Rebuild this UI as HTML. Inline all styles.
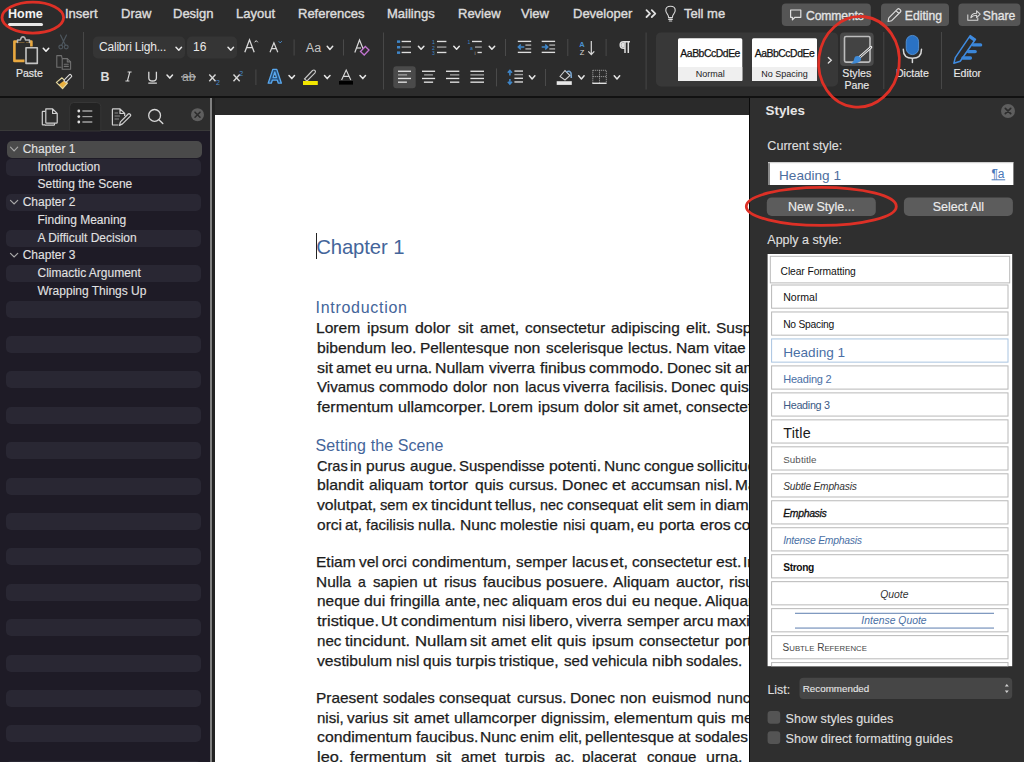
<!DOCTYPE html>
<html><head><meta charset="utf-8">
<style>
*{box-sizing:border-box;margin:0;padding:0}
html,body{width:1024px;height:762px;overflow:hidden;background:#2b2b2b;font-family:"Liberation Sans",sans-serif}
.a{position:absolute}
#ribbon{left:0;top:0;width:1024px;height:96px;background:#2c2c2c}
#rline{left:0;top:96px;width:1024px;height:2px;background:#111}
.tab{top:6px;font-size:13px;color:#dcdcdc;line-height:16px;white-space:nowrap;-webkit-text-stroke:0.4px #dcdcdc}
#nav{left:0;top:98px;width:210px;height:664px;background:#1e1b26}
#navtb{left:0;top:98px;width:210px;height:33px;background:#2d2d2d;border-bottom:1px solid #3a3a3a}
#vl1{left:210px;top:98px;width:2px;height:664px;background:#808080}
#vl2{left:212px;top:98px;width:3px;height:664px;background:#222}
#docbg{left:215px;top:98px;width:534px;height:664px;background:#2a2a2a}
#page{left:215px;top:115px;width:534px;height:647px;background:#fff}
#spl{left:749px;top:98px;width:1px;height:664px;background:#0a0a0a}
#sp{left:750px;top:98px;width:274px;height:664px;background:#2f2f2f}
.stripe{left:6px;width:195px;height:17px;border-radius:5px;background:#292733}
.nvi{font-size:12px;color:#e6e6e6;line-height:17px;white-space:nowrap}
.body{font-size:14px;line-height:20px;color:#1a1a1a;white-space:nowrap}
.head{color:#3b5a8c;white-space:nowrap}
.sitem{left:771px;width:237px;height:23px;border:1px solid #c4c4c4;background:#fff;white-space:nowrap;color:#111}
.btn{border-radius:5px;background:#5e5e5e;color:#f0f0f0;font-size:13px;text-align:center}
#page{overflow:hidden}
#page i{position:absolute;-webkit-text-stroke:0.25px #1c1c1c;font-style:normal;font-size:14.6px;line-height:20px;white-space:nowrap;transform-origin:0 0;transform:scaleX(1.12);color:#1c1c1c}
#page .hd{position:absolute;white-space:nowrap;color:#44659a}
</style></head><body>
<div id="ribbon" class="a"></div>
<div id="rline" class="a"></div>

<!-- tabs -->
<div class="a tab" style="left:8px;font-weight:bold;font-size:12.5px;color:#f2f2f2;-webkit-text-stroke:0">Home</div>
<div class="a" style="left:8px;top:23px;width:35px;height:3px;border-radius:2px;background:#e8e8e8"></div>
<div class="a tab" style="left:65px">Insert</div>
<div class="a tab" style="left:121px">Draw</div>
<div class="a tab" style="left:173px">Design</div>
<div class="a tab" style="left:236px">Layout</div>
<div class="a tab" style="left:298px">References</div>
<div class="a tab" style="left:387px">Mailings</div>
<div class="a tab" style="left:458px">Review</div>
<div class="a tab" style="left:521px">View</div>
<div class="a tab" style="left:573px">Developer</div>
<div class="a tab" style="left:684px">Tell me</div>


<svg class="a" style="left:0;top:0" width="1024" height="96" viewBox="0 0 1024 96">
<g fill="none" stroke-linecap="round" stroke-linejoin="round">
<!-- paste -->
<path d="M24.5 41.5 H14.4 V60.9 H24.5" stroke="#e9a83f" stroke-width="2.6" stroke-linecap="butt"/>
<path d="M26 41.5 H31.4 V46.5" stroke="#e9a83f" stroke-width="2.6" stroke-linecap="butt"/>
<path d="M17.5 42.5 V40 H20.5 Q21 36.8 23 36.8 Q25 36.8 25.5 40 H29.5 V42.5" stroke="#b8b8b8" stroke-width="1.5" fill="#2c2c2c"/>
<rect x="26" y="47.8" width="11.3" height="15.6" stroke="#c4c4c4" stroke-width="1.6" fill="#2c2c2c"/>
<path d="M43.3 48.3 L46 51.2 L48.7 48.3" stroke="#f0f0f0" stroke-width="1.6"/>
<!-- scissors -->
<g stroke="#4d565d" stroke-width="1.2">
<path d="M60.5 35 L65.5 45.5 M66.5 35 L61.5 45.5"/>
<circle cx="60.8" cy="47" r="1.9"/><circle cx="66.2" cy="47" r="1.9"/>
</g>
<!-- copy -->
<g stroke="#707070" stroke-width="1.1">
<path d="M61 67.3 H56.8 V55.6 H61.5 L62 58"/>
<path d="M62.2 58.6 H67.3 L70.6 61.9 V69.3 H62.2 Z"/>
<path d="M67.3 58.6 V61.9 H70.6 M64.3 64.2 H68.3 M64.3 66.4 H68.3"/>
</g>
<!-- format painter -->
<path d="M58.6 84.8 L64.6 80.2 L67.4 83.2 L62.6 88.6 Z" fill="#e9b040" stroke="none"/>
<path d="M56.4 82.4 L62 77.8 L67.4 83.2 L62.6 88.6 Z" stroke="#e4d8a0" stroke-width="1.2" fill="none"/>
<g transform="rotate(45 67.6 78.6)"><rect x="66.1" y="73.6" width="3" height="9" rx="1.2" stroke="#dcdcdc" stroke-width="1.1" fill="#2c2c2c"/></g>
</g>
<text x="16" y="77" font-family="Liberation Sans" font-size="10.5" fill="#e4e4e4" stroke="#e4e4e4" stroke-width="0.2">Paste</text>
<rect x="83" y="32" width="1" height="57" fill="#474747"/>
</svg>

<svg class="a" style="left:0;top:0" width="1024" height="96" viewBox="0 0 1024 96" font-family="Liberation Sans"><rect x="93" y="36.5" width="92" height="22" rx="5" fill="#353535"/>
<rect x="187" y="36.5" width="50" height="22" rx="5" fill="#353535"/>
<text x="99" y="51.3" font-size="12" fill="#e8e8e8" letter-spacing="-0.2">Calibri Ligh...</text>
<path d="M176.0 47.2 L178.8 50.3 L181.5 47.2" stroke="#e6e6e6" stroke-width="1.5" fill="none" stroke-linecap="round" stroke-linejoin="round"/>
<text x="193" y="51.3" font-size="12" fill="#e8e8e8">16</text>
<path d="M228.0 47.2 L230.8 50.3 L233.5 47.2" stroke="#e6e6e6" stroke-width="1.5" fill="none" stroke-linecap="round" stroke-linejoin="round"/>
<path d="M244.8 52.2 L249.5 39.8 L254.2 52.2 M246.5 47.6 H252.5" stroke="#d8d8d8" stroke-width="1.3" fill="none"/>
<path d="M254.6 42.3 L256.2 40.6 L257.8 42.3" stroke="#d8d8d8" stroke-width="1" fill="none"/>
<path d="M270 52.2 L273.9 42.8 L277.8 52.2 M271.4 48.6 H276.4" stroke="#d8d8d8" stroke-width="1.2" fill="none"/>
<path d="M278.6 41.2 L280.2 42.9 L281.8 41.2" stroke="#4a8ccc" stroke-width="1" fill="none"/>
<rect x="293.6" y="39.5" width="1" height="16" fill="#4a4a4a"/>
<text x="305.8" y="52.2" font-size="12.5" fill="#c4c4c4">Aa</text>
<path d="M327.2 46.3 L329.9 49.4 L332.7 46.3" stroke="#e6e6e6" stroke-width="1.5" fill="none" stroke-linecap="round" stroke-linejoin="round"/>
<rect x="343" y="39.5" width="1" height="16" fill="#4a4a4a"/>
<path d="M354.8 52.5 L359.5 40 L364 51" stroke="#d8d8d8" stroke-width="1.2" fill="none"/>
<path d="M356.4 48 H361" stroke="#d8d8d8" stroke-width="1.2"/>
<path d="M360.5 51.5 L365.3 46.5 L369 50 L364.2 55 Z" stroke="#c274d0" stroke-width="1.3" fill="#2c2c2c"/>
<rect x="383" y="32.5" width="1" height="57" fill="#474747"/>
<text x="100.5" y="81.2" font-size="12.5" font-weight="bold" fill="#dcdcdc">B</text>
<path d="M127.6 72 H131.6 M125.4 81 H129.4 M129.8 72 L127.4 81" stroke="#d8d8d8" stroke-width="1.1" fill="none"/>
<path d="M148.8 71.8 V78 Q148.8 81 152.6 81 Q156.4 81 156.4 78 V71.8 M148.3 83.2 H156.9" stroke="#d8d8d8" stroke-width="1.3" fill="none"/>
<path d="M167.0 75.0 L169.8 78.1 L172.5 75.0" stroke="#e6e6e6" stroke-width="1.5" fill="none" stroke-linecap="round" stroke-linejoin="round"/>
<text x="182" y="81.2" font-size="12" fill="#b0b0b0">ab</text>
<rect x="181" y="76.3" width="15" height="1.1" fill="#c0c0c0"/>
<path d="M209.3 74.5 L215.5 81.3 M215.5 74.5 L209.3 81.3" stroke="#d8d8d8" stroke-width="1.4"/>
<text x="216" y="84.5" font-size="7" fill="#4a8ccc">2</text>
<path d="M233.5 74.5 L239.7 81.3 M239.7 74.5 L233.5 81.3" stroke="#d8d8d8" stroke-width="1.4"/>
<text x="239.3" y="75.5" font-size="7" fill="#4a8ccc">2</text>
<rect x="255.4" y="69.5" width="1" height="15.5" fill="#4a4a4a"/>
<path d="M268.2 83.2 L272.8 69.4 H276.8 L281.4 83.2 H278.3 L277.3 80.2 H272.3 L271.3 83.2 Z M273.1 77.6 H276.5 L274.8 72 Z" fill="#24507e" fill-rule="evenodd" stroke="#5aa8ee" stroke-width="1.3" stroke-linejoin="round"/>

<path d="M289.0 75.5 L291.8 78.6 L294.5 75.5" stroke="#e6e6e6" stroke-width="1.5" fill="none" stroke-linecap="round" stroke-linejoin="round"/>
<path d="M304.5 79 L312.5 70.5 Q314 69.5 315 70.5 Q316 71.5 315 73 L307 81 Z" stroke="#c8c8c8" stroke-width="1.1" fill="#2c2c2c"/>
<rect x="303" y="81" width="14.8" height="4" fill="#f2e600"/>
<path d="M324.5 75.5 L327.2 78.6 L330.0 75.5" stroke="#e6e6e6" stroke-width="1.5" fill="none" stroke-linecap="round" stroke-linejoin="round"/>
<path d="M341.6 80 L346.2 70 L350.8 80 M343.3 76.4 H349.1" stroke="#d8d8d8" stroke-width="1.1" fill="none"/>
<rect x="339" y="81" width="14" height="3.6" fill="#000"/>
<path d="M360.0 75.5 L362.8 78.6 L365.5 75.5" stroke="#e6e6e6" stroke-width="1.5" fill="none" stroke-linecap="round" stroke-linejoin="round"/>
<rect x="397" y="40.4" width="3.2" height="2.5" fill="#3f86c8"/>
<rect x="397" y="46" width="3.2" height="2.5" fill="#3f86c8"/>
<rect x="397" y="51.4" width="3.2" height="2.5" fill="#3f86c8"/>
<rect x="401.6" y="40.8" width="9.4" height="1.35" fill="#dedede"/><rect x="401.6" y="46.4" width="9.4" height="1.35" fill="#a0a0a0"/><rect x="401.6" y="51.8" width="9.4" height="1.35" fill="#dedede"/>
<path d="M418.4 46.2 L421.1 49.3 L423.9 46.2" stroke="#e6e6e6" stroke-width="1.5" fill="none" stroke-linecap="round" stroke-linejoin="round"/>
<text x="432" y="44" font-size="5" fill="#3f86c8">1</text><text x="432" y="49.5" font-size="5" fill="#3f86c8">2</text><text x="432" y="55" font-size="5" fill="#3f86c8">3</text>
<rect x="437.0" y="40.8" width="9.4" height="1.35" fill="#dedede"/><rect x="437.0" y="46.4" width="9.4" height="1.35" fill="#a0a0a0"/><rect x="437.0" y="51.8" width="9.4" height="1.35" fill="#dedede"/>
<path d="M453.8 46.2 L456.6 49.3 L459.3 46.2" stroke="#e6e6e6" stroke-width="1.5" fill="none" stroke-linecap="round" stroke-linejoin="round"/>
<text x="467.6" y="44" font-size="5" fill="#3f86c8">1</text><text x="470" y="49.5" font-size="5" fill="#3f86c8">a</text><text x="474.6" y="55" font-size="5" fill="#a0a0a0">i</text>
<rect x="472" y="40.8" width="9.8" height="1.35" fill="#dedede"/><rect x="475" y="46.4" width="6.8" height="1.35" fill="#a0a0a0"/><rect x="477.5" y="51.8" width="4.3" height="1.35" fill="#dedede"/>
<path d="M489.2 46.2 L491.9 49.3 L494.7 46.2" stroke="#e6e6e6" stroke-width="1.5" fill="none" stroke-linecap="round" stroke-linejoin="round"/>
<rect x="505" y="39" width="1" height="17" fill="#4a4a4a"/>
<rect x="517.8" y="40.7" width="13.4" height="1.35" fill="#dedede"/><rect x="517.8" y="51.7" width="13.4" height="1.35" fill="#dedede"/>
<rect x="525.4" y="44.4" width="5.8" height="1.4" fill="#a8a8a8"/><rect x="525.4" y="48.2" width="5.8" height="1.4" fill="#a8a8a8"/>
<path d="M524.3 47 H518.3 M520.8 44.6 L518.3 47 L520.8 49.4" stroke="#3f86c8" stroke-width="1.5" fill="none"/>
<rect x="541.7" y="40.7" width="13.4" height="1.35" fill="#dedede"/><rect x="541.7" y="51.7" width="13.4" height="1.35" fill="#dedede"/>
<rect x="549.3000000000001" y="44.4" width="5.8" height="1.4" fill="#a8a8a8"/><rect x="549.3000000000001" y="48.2" width="5.8" height="1.4" fill="#a8a8a8"/>
<path d="M541.7 47 H547.7 M545.2 44.6 L547.7 47 L545.2 49.4" stroke="#3f86c8" stroke-width="1.5" fill="none"/>
<rect x="567.3" y="39" width="1" height="17" fill="#4a4a4a"/>
<text x="579.3" y="46.5" font-size="7.5" fill="#4a90d0" font-weight="bold">A</text>
<text x="579.8" y="55" font-size="7.5" fill="#d8d8d8">Z</text>
<path d="M591.3 41 V54.5 M588.3 51.3 L591.3 54.5 L594.3 51.3" stroke="#d8d8d8" stroke-width="1.2" fill="none"/>
<rect x="605.6" y="39" width="1" height="17" fill="#4a4a4a"/>
<path d="M625 41.8 V53 M628.3 41.8 V53 M630 41.8 H623.5 Q620.2 41.8 620.2 45 Q620.2 48.2 623.5 48.2 H625" stroke="#e0e0e0" stroke-width="1.5" fill="none"/>
<path d="M624.5 42.5 H622.8 Q621 42.8 621 45 Q621 47.4 623 47.4 H624.5 Z" fill="#e0e0e0"/>
<rect x="645.6" y="32.5" width="1" height="57" fill="#474747"/>
<rect x="393.3" y="66.2" width="22.4" height="22" rx="3" fill="#4a4a4a"/>
<rect x="398.0" y="70.6" width="13.0" height="1.35" fill="#e2e2e2"/><rect x="398.0" y="74.2" width="9.1" height="1.35" fill="#a0a0a0"/><rect x="398.0" y="77.8" width="13.0" height="1.35" fill="#e2e2e2"/><rect x="398.0" y="81.5" width="8.9" height="1.35" fill="#e2e2e2"/>
<rect x="422.0" y="70.60000000000001" width="13.1" height="1.35" fill="#e2e2e2"/>
<rect x="424.1" y="74.2" width="8.8" height="1.35" fill="#a0a0a0"/>
<rect x="422.0" y="77.8" width="13.1" height="1.35" fill="#e2e2e2"/>
<rect x="423.9" y="81.5" width="9.2" height="1.35" fill="#e2e2e2"/>
<rect x="446.0" y="70.60000000000001" width="13.3" height="1.35" fill="#e2e2e2"/>
<rect x="450.0" y="74.2" width="9.3" height="1.35" fill="#a0a0a0"/>
<rect x="446.0" y="77.8" width="13.3" height="1.35" fill="#e2e2e2"/>
<rect x="450.0" y="81.5" width="9.3" height="1.35" fill="#e2e2e2"/>
<rect x="470.4" y="70.6" width="13.6" height="1.35" fill="#e2e2e2"/><rect x="470.4" y="74.2" width="13.6" height="1.35" fill="#a0a0a0"/><rect x="470.4" y="77.8" width="13.6" height="1.35" fill="#e2e2e2"/><rect x="470.4" y="81.5" width="13.6" height="1.35" fill="#e2e2e2"/>
<rect x="496" y="68.4" width="1" height="18" fill="#4a4a4a"/>
<path d="M509.9 70.5 V75.5 M507.8 72.7 L509.9 70.5 L512 72.7 M509.9 79 V84 M507.8 81.8 L509.9 84 L512 81.8" stroke="#3f86c8" stroke-width="1.6" fill="none"/>
<rect x="514.4" y="70.4" width="8.6" height="1.35" fill="#dedede"/><rect x="514.4" y="73.9" width="8.6" height="1.35" fill="#a0a0a0"/><rect x="514.4" y="77.6" width="8.6" height="1.35" fill="#dedede"/><rect x="514.4" y="81.3" width="8.6" height="1.35" fill="#dedede"/>
<path d="M529.4 75.8 L532.1 78.9 L534.9 75.8" stroke="#e6e6e6" stroke-width="1.5" fill="none" stroke-linecap="round" stroke-linejoin="round"/>
<rect x="545" y="69" width="1" height="17" fill="#4a4a4a"/>
<path d="M560 76.5 L565 70.5 L570 75.5 L565 80 Z" stroke="#d0d0d0" stroke-width="1.1" fill="#2c2c2c"/>
<path d="M566.5 72 Q569.5 70 571 73 L571.3 78" stroke="#7aa6d0" stroke-width="1.6" fill="none"/>
<rect x="556.7" y="81.2" width="15.1" height="3.7" fill="#e8e8e8"/>
<path d="M578.6 75.8 L581.4 78.9 L584.1 75.8" stroke="#e6e6e6" stroke-width="1.5" fill="none" stroke-linecap="round" stroke-linejoin="round"/>
<path d="M592.8 70.3 H606.3 V83 M592.8 70.3 V83 M599.5 70.3 V83 M592.8 76.6 H606.3" stroke="#a8a8a8" stroke-width="1" stroke-dasharray="1 1" fill="none"/>
<rect x="592.3" y="82.6" width="14.3" height="1.4" fill="#e0e0e0"/>
<path d="M614.2 75.8 L617.0 78.9 L619.7 75.8" stroke="#e6e6e6" stroke-width="1.5" fill="none" stroke-linecap="round" stroke-linejoin="round"/></svg>
<svg class="a" style="left:0;top:0" width="1024" height="96" viewBox="0 0 1024 96" font-family="Liberation Sans"><rect x="656" y="32.4" width="182" height="54" rx="5" fill="#383838"/>
<rect x="678" y="38.3" width="64.3" height="42.7" rx="1.5" fill="#ffffff"/>
<rect x="678" y="67" width="64.3" height="14" fill="#efefef"/>
<text x="710.15" y="57.3" font-size="10.4" fill="#111" text-anchor="middle" letter-spacing="-0.45" stroke="#111" stroke-width="0.25">AaBbCcDdEe</text>
<text x="710.15" y="76.8" font-size="9" fill="#222" text-anchor="middle">Normal</text>
<rect x="752" y="38.3" width="65" height="42.7" rx="1.5" fill="#ffffff"/>
<rect x="752" y="67" width="65" height="14" fill="#efefef"/>
<text x="784.5" y="57.3" font-size="10.4" fill="#111" text-anchor="middle" letter-spacing="-0.45" stroke="#111" stroke-width="0.25">AaBbCcDdEe</text>
<text x="784.5" y="76.8" font-size="9" fill="#222" text-anchor="middle">No Spacing</text>
<path d="M828.3 57.5 L831.3 60.3 L828.3 63.1" stroke="#e0e0e0" stroke-width="1.3" fill="none" stroke-linecap="round"/>
<rect x="840" y="32.6" width="33.7" height="33.3" rx="4" fill="#4a4a4a"/>
<rect x="844.5" y="36.5" width="25.5" height="25.6" rx="1.5" fill="#434343" stroke="#bdbdbd" stroke-width="1.6"/>
<path d="M871 47.2 L859 57.8" stroke="#e8e8e8" stroke-width="2.6" stroke-linecap="round"/><path d="M870.6 47.6 L859.5 57.4" stroke="#434343" stroke-width="0.9" stroke-linecap="round"/>
<path d="M857.8 56 Q861.5 56.8 861 59.8 Q859.8 63.8 850.8 63.8 Q853.8 61.8 854 59.4 Q854.6 55.6 857.8 56 Z" fill="#3f8ad6"/>
<text x="856.8" y="77.3" font-size="10.6" fill="#e8e8e8" text-anchor="middle" stroke="#e8e8e8" stroke-width="0.15">Styles</text>
<text x="856.8" y="88.5" font-size="10.6" fill="#e8e8e8" text-anchor="middle" stroke="#e8e8e8" stroke-width="0.15">Pane</text>
<rect x="883.3" y="32" width="1" height="57" fill="#474747"/>
<rect x="906.2" y="35.4" width="12.4" height="19.2" rx="6.2" fill="#2a72c4" stroke="#5a9be0" stroke-width="0.8"/>
<path d="M903.3 49.2 Q903.3 58.3 912.4 58.3 Q921.5 58.3 921.5 49.2 M912.4 58.3 V62.6" stroke="#d8d8d8" stroke-width="1.5" fill="none" stroke-linecap="round"/>
<text x="912.4" y="77.3" font-size="10.6" fill="#e8e8e8" text-anchor="middle" stroke="#e8e8e8" stroke-width="0.15">Dictate</text>
<rect x="941" y="32" width="1" height="57" fill="#474747"/>
<path d="M953.9 63.3 L955.3 57.6 L970.2 35.6 L975.5 39.3 L960.2 61.2 Z" stroke="#3f8be0" stroke-width="1.5" fill="none" stroke-linejoin="round"/>
<path d="M970.2 35.6 L975.5 39.3 L974 41.4 L968.7 37.7 Z" fill="#3f8be0"/>
<path d="M973.4 44.9 H980.6 M968.4 51.6 H975.2 M963 58 H970.4" stroke="#3b86d8" stroke-width="3.4" stroke-linecap="round"/>
<text x="967.3" y="77.3" font-size="10.6" fill="#e8e8e8" text-anchor="middle" stroke="#e8e8e8" stroke-width="0.15">Editor</text>
<rect x="781.8" y="3.5" width="89" height="22.5" rx="4" fill="#555555"/>
<path d="M790.6 10 H800.8 V17.3 H795 L792.4 19.8 V17.3 H790.6 Z" stroke="#e0e0e0" stroke-width="1.2" fill="none" stroke-linejoin="round"/>
<text x="806" y="19.7" font-size="12.2" letter-spacing="-0.15" fill="#e4e4e4" stroke="#e4e4e4" stroke-width="0.3">Comments</text>
<rect x="881" y="3.5" width="68" height="22.5" rx="4" fill="#555555"/>
<path d="M888 21.5 L888.8 17.8 L897.5 9.1 Q898.5 8.1 899.5 9.1 L900.4 10 Q901.4 11 900.4 12 L891.7 20.7 Z M896 10.6 L898.9 13.5" stroke="#e0e0e0" stroke-width="1.1" fill="none" stroke-linejoin="round"/>
<text x="904.8" y="19.7" font-size="12.2" fill="#e4e4e4" stroke="#e4e4e4" stroke-width="0.3">Editing</text>
<rect x="958.4" y="3.5" width="62" height="22.5" rx="4" fill="#555555"/>
<path d="M967.8 14.5 V20.3 H977.8 V17.8 M970.8 17.8 Q971.3 13.2 976.6 13.2 V10.8 L980.2 14.2 L976.6 17.6 V15.3 Q973 15.3 970.8 17.8 Z" stroke="#d8d8d8" stroke-width="1.05" fill="none" stroke-linejoin="round"/>
<text x="982.8" y="19.7" font-size="12.2" fill="#e4e4e4" stroke="#e4e4e4" stroke-width="0.3">Share</text>
<path d="M646.5 10.2 L650 13.6 L646.5 17 M651.8 10.2 L655.3 13.6 L651.8 17" stroke="#e0e0e0" stroke-width="1.8" fill="none" stroke-linecap="round" stroke-linejoin="round"/>
<path d="M668.6 17.6 Q668.6 15.4 667.2 13.8 Q665.8 12.2 665.8 10.2 Q665.8 6.2 670.5 6.2 Q675.2 6.2 675.2 10.2 Q675.2 12.2 673.8 13.8 Q672.4 15.4 672.4 17.6 Z M668.7 19.4 H672.3 M669.3 21 H671.7" stroke="#d8d8d8" stroke-width="1.1" fill="none" stroke-linejoin="round" stroke-linecap="round"/></svg>
<!-- panes -->
<div id="nav" class="a"></div>
<div id="navtb" class="a"></div>
<div class="a stripe" style="top:158.9px"></div>
<div class="a stripe" style="top:194.3px"></div>
<div class="a stripe" style="top:229.7px"></div>
<div class="a stripe" style="top:265.1px"></div>
<div class="a stripe" style="top:300.5px"></div>
<div class="a stripe" style="top:335.9px"></div>
<div class="a stripe" style="top:371.3px"></div>
<div class="a stripe" style="top:406.7px"></div>
<div class="a stripe" style="top:442.1px"></div>
<div class="a stripe" style="top:477.5px"></div>
<div class="a stripe" style="top:512.9px"></div>
<div class="a stripe" style="top:548.3px"></div>
<div class="a stripe" style="top:583.7px"></div>
<div class="a stripe" style="top:619.1px"></div>
<div class="a stripe" style="top:654.5px"></div>
<div class="a stripe" style="top:689.9px"></div>
<div class="a stripe" style="top:725.3px"></div>
<div class="a stripe" style="top:760.7px"></div>
<div class="a" style="left:6.5px;top:141.2px;width:195px;height:17px;border-radius:5px;background:#4a4a4a"></div>
<svg class="a" style="left:0;top:98px" width="210" height="220" viewBox="0 98 210 220" font-family="Liberation Sans">
<text x="22.7" y="153.0" font-size="12" fill="#e2e2e2" stroke="#e2e2e2" stroke-width="0.1">Chapter 1</text>
<path d="M10.5 147.2 L14.1 150.8 L17.7 147.2" stroke="#a8a8a8" stroke-width="1.2" fill="none" stroke-linecap="round"/>
<text x="37.5" y="170.9" font-size="12" fill="#e2e2e2" stroke="#e2e2e2" stroke-width="0.1">Introduction</text>
<text x="37.5" y="188.4" font-size="12" fill="#e2e2e2" stroke="#e2e2e2" stroke-width="0.1">Setting the Scene</text>
<text x="22.7" y="206.1" font-size="12" fill="#e2e2e2" stroke="#e2e2e2" stroke-width="0.1">Chapter 2</text>
<path d="M10.5 200.3 L14.1 203.9 L17.7 200.3" stroke="#a8a8a8" stroke-width="1.2" fill="none" stroke-linecap="round"/>
<text x="37.5" y="223.8" font-size="12" fill="#e2e2e2" stroke="#e2e2e2" stroke-width="0.1">Finding Meaning</text>
<text x="37.5" y="241.5" font-size="12" fill="#e2e2e2" stroke="#e2e2e2" stroke-width="0.1">A Difficult Decision</text>
<text x="22.7" y="259.2" font-size="12" fill="#e2e2e2" stroke="#e2e2e2" stroke-width="0.1">Chapter 3</text>
<path d="M10.5 253.4 L14.1 257.0 L17.7 253.4" stroke="#a8a8a8" stroke-width="1.2" fill="none" stroke-linecap="round"/>
<text x="37.5" y="276.9" font-size="12" fill="#e2e2e2" stroke="#e2e2e2" stroke-width="0.1">Climactic Argument</text>
<text x="37.5" y="294.6" font-size="12" fill="#e2e2e2" stroke="#e2e2e2" stroke-width="0.1">Wrapping Things Up</text>
<path d="M69.7 131 V106.5 Q69.7 102.5 73.7 102.5 H96.8 Q100.8 102.5 100.8 106.5 V131 Z" fill="#232323" stroke="#3a3a3a" stroke-width="0.8"/>
<g fill="none" stroke="#d0d0d0" stroke-width="1.2" stroke-linejoin="round">
<path d="M45.4 124.9 H42.9 Q42.3 124.9 42.3 124.3 V112 Q42.3 111.4 42.9 111.4 H45.4"/>
<path d="M45.8 108.9 H52.6 L57.2 113.5 V122.4 Q57.2 123.2 56.4 123.2 H46.6 Q45.8 123.2 45.8 122.4 Z M52.6 108.9 V113.5 H57.2"/>
<path d="M45.4 124.9 V125.2 H53.8 Q54.5 125.2 54.5 124.5 V123.2"/>
</g>
<circle cx="78.8" cy="111" r="1.4" fill="#e0e0e0"/>
<circle cx="78.8" cy="116.6" r="1.4" fill="#e0e0e0"/>
<circle cx="78.8" cy="122" r="1.4" fill="#e0e0e0"/>
<path d="M82.4 111 H92.3 M82.4 122 H92.3" stroke="#e0e0e0" stroke-width="1.2"/><path d="M82.4 116.6 H92.3" stroke="#a0a0a0" stroke-width="1.2"/>
<g fill="none" stroke="#d0d0d0" stroke-width="1.2" stroke-linejoin="round">
<path d="M118.5 125 H113 Q112.4 125 112.4 124.4 V109.4 Q112.4 108.8 113 108.8 H120 L124.7 113.5 V116 M120 108.8 V113.5 H124.7"/>
<path d="M119.5 125.4 L120.4 121.8 L128.2 114 Q129 113.2 129.8 114 L130.3 114.5 Q131.1 115.3 130.3 116.1 L122.5 123.9 Z"/>
<path d="M114.6 113 H118 M114.6 116 H120 M114.6 119 H119" stroke="#8a8a8a"/>
</g>
<circle cx="154.6" cy="115.4" r="5.9" stroke="#d8d8d8" stroke-width="1.3" fill="none"/><path d="M158.9 119.7 L162.8 123.4" stroke="#d8d8d8" stroke-width="1.4" stroke-linecap="round"/>
<circle cx="197.5" cy="114.7" r="6.5" fill="#5e5e5e"/><path d="M195 112.2 L200 117.2 M200 112.2 L195 117.2" stroke="#2c2c2c" stroke-width="1.6" stroke-linecap="round"/>
</svg>
<div id="vl1" class="a"></div>
<div id="vl2" class="a"></div>
<div id="docbg" class="a"></div>
<div id="page" class="a">
<div class="hd" style="left:101.2px;top:120.1px;font-size:20.3px;line-height:24px;letter-spacing:-0.1px">Chapter 1</div>
<div class="a" style="left:101.2px;top:117.8px;width:1px;height:26.4px;background:#222"></div>
<div class="hd" style="left:100.6px;top:182.8px;font-size:16px;line-height:20px;letter-spacing:0.7px">Introduction</div>
<div class="hd" style="left:100.6px;top:320.5px;font-size:16px;line-height:20px;letter-spacing:0.1px">Setting the Scene</div>
<i style="left:100.5px;top:202.8px;transform:scaleX(1.070)">Lorem</i>
<i style="left:151.8px;top:202.8px;transform:scaleX(1.070)">ipsum</i>
<i style="left:200.2px;top:202.8px;transform:scaleX(1.088)">dolor</i>
<i style="left:243.2px;top:202.8px;transform:scaleX(1.037)">sit</i>
<i style="left:264.9px;top:202.8px;transform:scaleX(1.070)">amet,</i>
<i style="left:309.6px;top:202.8px;transform:scaleX(1.061)">consectetur</i>
<i style="left:396.0px;top:202.8px;transform:scaleX(1.060)">adipiscing</i>
<i style="left:470.7px;top:202.8px;transform:scaleX(1.099)">elit.</i>
<i style="left:501.4px;top:202.8px;transform:scaleX(1.060)">Suspendisse</i>
<i style="left:101.6px;top:222.6px;transform:scaleX(1.080)">bibendum</i>
<i style="left:176.3px;top:222.6px;transform:scaleX(1.084)">leo.</i>
<i style="left:205.2px;top:222.6px;transform:scaleX(1.056)">Pellentesque</i>
<i style="left:299.3px;top:222.6px;transform:scaleX(1.080)">non</i>
<i style="left:330.8px;top:222.6px;transform:scaleX(1.046)">scelerisque</i>
<i style="left:412.8px;top:222.6px;transform:scaleX(1.050)">lectus.</i>
<i style="left:460.8px;top:222.6px;transform:scaleX(1.078)">Nam</i>
<i style="left:499.3px;top:222.6px;transform:scaleX(1.027)">vitae</i>
<i style="left:537.0px;top:222.6px;transform:scaleX(1.060)">lorem</i>
<i style="left:101.6px;top:242.5px;transform:scaleX(1.092)">sit</i>
<i style="left:120.6px;top:242.5px;transform:scaleX(1.076)">amet</i>
<i style="left:159.5px;top:242.5px;transform:scaleX(1.076)">eu</i>
<i style="left:181.1px;top:242.5px;transform:scaleX(1.089)">urna.</i>
<i style="left:219.9px;top:242.5px;transform:scaleX(1.083)">Nullam</i>
<i style="left:273.7px;top:242.5px;transform:scaleX(1.048)">viverra</i>
<i style="left:324.7px;top:242.5px;transform:scaleX(1.081)">finibus</i>
<i style="left:374.0px;top:242.5px;transform:scaleX(1.093)">commodo.</i>
<i style="left:451.7px;top:242.5px;transform:scaleX(1.049)">Donec</i>
<i style="left:500.0px;top:242.5px;transform:scaleX(1.092)">sit</i>
<i style="left:519.8px;top:242.5px;transform:scaleX(1.060)">amet</i>
<i style="left:101.6px;top:262.3px;transform:scaleX(1.035)">Vivamus</i>
<i style="left:163.6px;top:262.3px;transform:scaleX(1.075)">commodo</i>
<i style="left:237.8px;top:262.3px;transform:scaleX(1.054)">dolor</i>
<i style="left:278.4px;top:262.3px;transform:scaleX(1.067)">non</i>
<i style="left:309.6px;top:262.3px;transform:scaleX(1.025)">lacus</i>
<i style="left:348.4px;top:262.3px;transform:scaleX(1.057)">viverra</i>
<i style="left:400.4px;top:262.3px;transform:scaleX(1.029)">facilisis.</i>
<i style="left:456.4px;top:262.3px;transform:scaleX(1.055)">Donec</i>
<i style="left:505.1px;top:262.3px;transform:scaleX(1.073)">quis</i>
<i style="left:101.6px;top:282.1px;transform:scaleX(1.095)">fermentum</i>
<i style="left:182.9px;top:282.1px;transform:scaleX(1.099)">ullamcorper.</i>
<i style="left:273.8px;top:282.1px;transform:scaleX(1.060)">Lorem</i>
<i style="left:322.8px;top:282.1px;transform:scaleX(1.054)">ipsum</i>
<i style="left:368.9px;top:282.1px;transform:scaleX(1.071)">dolor</i>
<i style="left:408.4px;top:282.1px;transform:scaleX(1.092)">sit</i>
<i style="left:428.2px;top:282.1px;transform:scaleX(1.070)">amet,</i>
<i style="left:470.7px;top:282.1px;transform:scaleX(1.060)">consectetur</i>
<i style="left:101.6px;top:340.5px;transform:scaleX(0.996)">Cras</i>
<i style="left:135.3px;top:340.5px;transform:scaleX(1.037)">in</i>
<i style="left:151.4px;top:340.5px;transform:scaleX(1.067)">purus</i>
<i style="left:194.6px;top:340.5px;transform:scaleX(1.044)">augue.</i>
<i style="left:244.4px;top:340.5px;transform:scaleX(1.025)">Suspendisse</i>
<i style="left:333.7px;top:340.5px;transform:scaleX(1.087)">potenti.</i>
<i style="left:389.0px;top:340.5px;transform:scaleX(1.066)">Nunc</i>
<i style="left:428.9px;top:340.5px;transform:scaleX(1.044)">congue</i>
<i style="left:482.4px;top:340.5px;transform:scaleX(1.060)">sollicitudin</i>
<i style="left:101.6px;top:360.1px;transform:scaleX(1.082)">blandit</i>
<i style="left:153.9px;top:360.1px;transform:scaleX(1.068)">aliquam</i>
<i style="left:214.4px;top:360.1px;transform:scaleX(1.150)">tortor</i>
<i style="left:259.8px;top:360.1px;transform:scaleX(1.070)">quis</i>
<i style="left:294.2px;top:360.1px;transform:scaleX(1.038)">cursus.</i>
<i style="left:346.6px;top:360.1px;transform:scaleX(1.083)">Donec</i>
<i style="left:396.7px;top:360.1px;transform:scaleX(1.123)">et</i>
<i style="left:415.8px;top:360.1px;transform:scaleX(1.040)">accumsan</i>
<i style="left:489.7px;top:360.1px;transform:scaleX(1.057)">nisl.</i>
<i style="left:520.1px;top:360.1px;transform:scaleX(1.060)">Mauris</i>
<i style="left:101.6px;top:379.8px;transform:scaleX(1.077)">volutpat,</i>
<i style="left:165.0px;top:379.8px;transform:scaleX(1.009)">sem</i>
<i style="left:196.8px;top:379.8px;transform:scaleX(1.006)">ex</i>
<i style="left:215.8px;top:379.8px;transform:scaleX(1.117)">tincidunt</i>
<i style="left:280.3px;top:379.8px;transform:scaleX(1.077)">tellus,</i>
<i style="left:325.0px;top:379.8px;transform:scaleX(0.987)">nec</i>
<i style="left:352.1px;top:379.8px;transform:scaleX(1.055)">consequat</i>
<i style="left:427.5px;top:379.8px;transform:scaleX(1.055)">elit</i>
<i style="left:451.6px;top:379.8px;transform:scaleX(1.044)">sem</i>
<i style="left:484.6px;top:379.8px;transform:scaleX(0.988)">in</i>
<i style="left:500.0px;top:379.8px;transform:scaleX(1.060)">diam</i>
<i style="left:101.6px;top:399.5px;transform:scaleX(1.064)">orci</i>
<i style="left:130.2px;top:399.5px;transform:scaleX(1.050)">at,</i>
<i style="left:151.4px;top:399.5px;transform:scaleX(1.025)">facilisis</i>
<i style="left:203.4px;top:399.5px;transform:scaleX(1.075)">nulla.</i>
<i style="left:244.8px;top:399.5px;transform:scaleX(1.066)">Nunc</i>
<i style="left:285.4px;top:399.5px;transform:scaleX(1.063)">molestie</i>
<i style="left:347.7px;top:399.5px;transform:scaleX(1.017)">nisi</i>
<i style="left:374.8px;top:399.5px;transform:scaleX(1.099)">quam,</i>
<i style="left:422.4px;top:399.5px;transform:scaleX(1.041)">eu</i>
<i style="left:443.6px;top:399.5px;transform:scaleX(1.067)">porta</i>
<i style="left:484.6px;top:399.5px;transform:scaleX(1.083)">eros</i>
<i style="left:519.0px;top:399.5px;transform:scaleX(1.060)">congue</i>
<i style="left:100.5px;top:436.8px;transform:scaleX(1.062)">Etiam</i>
<i style="left:143.5px;top:436.8px;transform:scaleX(1.059)">vel</i>
<i style="left:167.2px;top:436.8px;transform:scaleX(1.064)">orci</i>
<i style="left:196.6px;top:436.8px;transform:scaleX(1.081)">condimentum,</i>
<i style="left:300.7px;top:436.8px;transform:scaleX(1.048)">semper</i>
<i style="left:356.6px;top:436.8px;transform:scaleX(1.067)">lacus</i>
<i style="left:395.2px;top:436.8px;transform:scaleX(1.119)">et,</i>
<i style="left:416.5px;top:436.8px;transform:scaleX(1.061)">consectetur</i>
<i style="left:500.8px;top:436.8px;transform:scaleX(1.074)">est.</i>
<i style="left:528.1px;top:436.8px;transform:scaleX(1.060)">In</i>
<i style="left:100.5px;top:456.6px;transform:scaleX(1.057)">Nulla</i>
<i style="left:143.1px;top:456.6px;transform:scaleX(0.964)">a</i>
<i style="left:157.7px;top:456.6px;transform:scaleX(1.036)">sapien</i>
<i style="left:208.4px;top:456.6px;transform:scaleX(1.136)">ut</i>
<i style="left:228.9px;top:456.6px;transform:scaleX(1.056)">risus</i>
<i style="left:267.6px;top:456.6px;transform:scaleX(1.072)">faucibus</i>
<i style="left:331.4px;top:456.6px;transform:scaleX(1.090)">posuere.</i>
<i style="left:398.4px;top:456.6px;transform:scaleX(1.072)">Aliquam</i>
<i style="left:460.6px;top:456.6px;transform:scaleX(1.093)">auctor,</i>
<i style="left:514.2px;top:456.6px;transform:scaleX(1.060)">risus</i>
<i style="left:101.6px;top:476.4px;transform:scaleX(1.058)">neque</i>
<i style="left:148.6px;top:476.4px;transform:scaleX(1.086)">dui</i>
<i style="left:174.6px;top:476.4px;transform:scaleX(1.078)">fringilla</i>
<i style="left:229.7px;top:476.4px;transform:scaleX(1.091)">ante,</i>
<i style="left:268.4px;top:476.4px;transform:scaleX(1.045)">nec</i>
<i style="left:296.7px;top:476.4px;transform:scaleX(1.088)">aliquam</i>
<i style="left:356.6px;top:476.4px;transform:scaleX(1.058)">eros</i>
<i style="left:391.3px;top:476.4px;transform:scaleX(1.056)">dui</i>
<i style="left:416.5px;top:476.4px;transform:scaleX(1.101)">eu</i>
<i style="left:438.6px;top:476.4px;transform:scaleX(1.075)">neque.</i>
<i style="left:489.8px;top:476.4px;transform:scaleX(1.060)">Aliquam</i>
<i style="left:101.6px;top:496.2px;transform:scaleX(1.124)">tristique.</i>
<i style="left:165.6px;top:496.2px;transform:scaleX(1.110)">Ut</i>
<i style="left:186.1px;top:496.2px;transform:scaleX(1.093)">condimentum</i>
<i style="left:286.5px;top:496.2px;transform:scaleX(1.076)">nisi</i>
<i style="left:314.0px;top:496.2px;transform:scaleX(1.105)">libero,</i>
<i style="left:361.3px;top:496.2px;transform:scaleX(1.043)">viverra</i>
<i style="left:411.8px;top:496.2px;transform:scaleX(1.074)">semper</i>
<i style="left:467.7px;top:496.2px;transform:scaleX(1.078)">arcu</i>
<i style="left:502.4px;top:496.2px;transform:scaleX(1.060)">maximus</i>
<i style="left:101.6px;top:516.0px;transform:scaleX(1.035)">nec</i>
<i style="left:130.4px;top:516.0px;transform:scaleX(1.112)">tincidunt.</i>
<i style="left:199.5px;top:516.0px;transform:scaleX(1.148)">Nullam</i>
<i style="left:255.0px;top:516.0px;transform:scaleX(1.109)">sit</i>
<i style="left:276.2px;top:516.0px;transform:scaleX(1.084)">amet</i>
<i style="left:316.4px;top:516.0px;transform:scaleX(1.119)">elit</i>
<i style="left:342.4px;top:516.0px;transform:scaleX(1.088)">quis</i>
<i style="left:377.1px;top:516.0px;transform:scaleX(1.070)">ipsum</i>
<i style="left:424.4px;top:516.0px;transform:scaleX(1.061)">consectetur</i>
<i style="left:509.5px;top:516.0px;transform:scaleX(1.060)">porta</i>
<i style="left:101.6px;top:535.8px;transform:scaleX(1.075)">vestibulum</i>
<i style="left:180.9px;top:535.8px;transform:scaleX(1.076)">nisl</i>
<i style="left:208.4px;top:535.8px;transform:scaleX(1.064)">quis</i>
<i style="left:240.8px;top:535.8px;transform:scaleX(1.116)">turpis</i>
<i style="left:284.1px;top:535.8px;transform:scaleX(1.083)">tristique,</i>
<i style="left:348.7px;top:535.8px;transform:scaleX(1.039)">sed</i>
<i style="left:377.1px;top:535.8px;transform:scaleX(1.032)">vehicula</i>
<i style="left:437.0px;top:535.8px;transform:scaleX(1.100)">nibh</i>
<i style="left:470.9px;top:535.8px;transform:scaleX(1.036)">sodales.</i>
<i style="left:100.5px;top:573.3px;transform:scaleX(1.057)">Praesent</i>
<i style="left:167.5px;top:573.3px;transform:scaleX(1.030)">sodales</i>
<i style="left:223.9px;top:573.3px;transform:scaleX(1.063)">consequat</i>
<i style="left:301.5px;top:573.3px;transform:scaleX(1.051)">cursus.</i>
<i style="left:354.6px;top:573.3px;transform:scaleX(1.069)">Donec</i>
<i style="left:404.8px;top:573.3px;transform:scaleX(1.077)">non</i>
<i style="left:437.0px;top:573.3px;transform:scaleX(1.072)">euismod</i>
<i style="left:502.2px;top:573.3px;transform:scaleX(1.060)">nunc</i>
<i style="left:101.6px;top:592.8px;transform:scaleX(1.031)">nisi,</i>
<i style="left:132.4px;top:592.8px;transform:scaleX(1.057)">varius</i>
<i style="left:178.2px;top:592.8px;transform:scaleX(1.065)">sit</i>
<i style="left:198.7px;top:592.8px;transform:scaleX(1.084)">amet</i>
<i style="left:238.5px;top:592.8px;transform:scaleX(1.078)">ullamcorper</i>
<i style="left:326.4px;top:592.8px;transform:scaleX(1.056)">dignissim,</i>
<i style="left:398.9px;top:592.8px;transform:scaleX(1.089)">elementum</i>
<i style="left:482.4px;top:592.8px;transform:scaleX(1.070)">quis</i>
<i style="left:516.1px;top:592.8px;transform:scaleX(1.060)">metus</i>
<i style="left:101.6px;top:612.3px;transform:scaleX(1.082)">condimentum</i>
<i style="left:201.2px;top:612.3px;transform:scaleX(1.068)">faucibus.</i>
<i style="left:265.3px;top:612.3px;transform:scaleX(1.066)">Nunc</i>
<i style="left:305.2px;top:612.3px;transform:scaleX(1.084)">enim</i>
<i style="left:344.0px;top:612.3px;transform:scaleX(1.017)">elit,</i>
<i style="left:370.4px;top:612.3px;transform:scaleX(1.075)">pellentesque</i>
<i style="left:463.4px;top:612.3px;transform:scaleX(1.024)">at</i>
<i style="left:479.5px;top:612.3px;transform:scaleX(1.054)">sodales</i>
<i style="left:101.6px;top:631.8px;transform:scaleX(1.120)">leo.</i>
<i style="left:134.5px;top:631.8px;transform:scaleX(1.095)">fermentum</i>
<i style="left:221.0px;top:631.8px;transform:scaleX(1.048)">sit</i>
<i style="left:245.9px;top:631.8px;transform:scaleX(1.076)">amet</i>
<i style="left:289.8px;top:631.8px;transform:scaleX(1.121)">turpis</i>
<i style="left:339.6px;top:631.8px;transform:scaleX(1.003)">ac.</i>
<i style="left:367.4px;top:631.8px;transform:scaleX(1.046)">placerat</i>
<i style="left:431.9px;top:631.8px;transform:scaleX(1.031)">congue</i>
<i style="left:490.5px;top:631.8px;transform:scaleX(1.099)">urna.</i>
</div>
<div id="spl" class="a"></div>
<div id="sp" class="a"></div>
<svg class="a" style="left:750px;top:98px" width="274" height="664" viewBox="750 98 274 664" font-family="Liberation Sans">
<text x="765.5" y="114.9" font-size="13.4" font-weight="bold" fill="#e6e6e6">Styles</text>
<circle cx="1008" cy="111" r="7" fill="#5e5e5e"/><path d="M1005.3 108.3 L1010.7 113.7 M1010.7 108.3 L1005.3 113.7" stroke="#2c2c2c" stroke-width="1.7" stroke-linecap="round"/>
<text x="767.3" y="150.4" font-size="12.6" fill="#dedede" stroke="#dedede" stroke-width="0.15">Current style:</text>
<rect x="768" y="162.2" width="245.4" height="22.8" fill="#ffffff"/>
<rect x="768" y="162.2" width="2" height="22.8" fill="#8a8a8a"/><rect x="768" y="162.2" width="245.4" height="1" fill="#cfcfcf"/>
<text x="779" y="180.4" font-size="13.6" fill="#4d6e9e">Heading 1</text>
<text x="991.4" y="178.2" font-size="12" fill="#4a78b8">¶a</text><rect x="991.6" y="179.3" width="13.6" height="1" fill="#4a78b8"/>
<rect x="766.8" y="197.4" width="109" height="18.5" rx="5" fill="#5c5c5c"/>
<text x="821.3" y="211" font-size="12.5" fill="#ececec" text-anchor="middle" stroke="#ececec" stroke-width="0.15">New Style...</text>
<rect x="903.9" y="197.4" width="109" height="18.5" rx="5" fill="#5c5c5c"/>
<text x="958.4" y="211" font-size="12.5" fill="#ececec" text-anchor="middle" stroke="#ececec" stroke-width="0.15">Select All</text>
<text x="767.3" y="244.4" font-size="12.5" fill="#dedede" stroke="#dedede" stroke-width="0.15">Apply a style:</text>
<rect x="767.6" y="254" width="244.6" height="412.2" fill="#ffffff"/>
<clipPath id="lc"><rect x="767.6" y="254" width="244.6" height="412.2"/></clipPath><g clip-path="url(#lc)">
<rect x="770.3" y="256.3" width="239.4" height="26.6" fill="#fff" stroke="#b8b8b8" stroke-width="1"/>
<text x="780.6" y="274.5" font-size="10.3" fill="#111" letter-spacing="-0.1">Clear Formatting</text>
<rect x="771.6" y="285.00" width="236.4" height="23.2" fill="#fff" stroke="#b8b8b8" stroke-width="1"/>
<text x="783.2" y="300.8" font-size="10.6" fill="#111">Normal</text>
<rect x="771.6" y="311.97" width="236.4" height="23.2" fill="#fff" stroke="#b8b8b8" stroke-width="1"/>
<text x="783.2" y="327.8" font-size="10.3" fill="#111" letter-spacing="-0.25">No Spacing</text>
<rect x="771.6" y="338.94" width="236.4" height="23.2" fill="#fff" stroke="#a9c4e0" stroke-width="1"/>
<text x="783.2" y="357.1" font-size="13.6" fill="#4a6fa5">Heading 1</text>
<rect x="771.6" y="365.91" width="236.4" height="23.2" fill="#fff" stroke="#b8b8b8" stroke-width="1"/>
<text x="783.2" y="382.7" font-size="11" fill="#4a6fa5" letter-spacing="-0.2">Heading 2</text>
<rect x="771.6" y="392.88" width="236.4" height="23.2" fill="#fff" stroke="#b8b8b8" stroke-width="1"/>
<text x="783.2" y="408.7" font-size="10.8" fill="#3c5a85" letter-spacing="-0.3">Heading 3</text>
<rect x="771.6" y="419.85" width="236.4" height="23.2" fill="#fff" stroke="#b8b8b8" stroke-width="1"/>
<text x="783.2" y="437.5" font-size="14.4" fill="#1a1a1a" letter-spacing="0.2">Title</text>
<rect x="771.6" y="446.82" width="236.4" height="23.2" fill="#fff" stroke="#b8b8b8" stroke-width="1"/>
<text x="783.2" y="462.6" font-size="9.8" fill="#555" letter-spacing="0.1">Subtitle</text>
<rect x="771.6" y="473.79" width="236.4" height="23.2" fill="#fff" stroke="#b8b8b8" stroke-width="1"/>
<text x="783.2" y="489.6" font-size="10.2" fill="#333" font-style="italic" letter-spacing="-0.2">Subtle Emphasis</text>
<rect x="771.6" y="500.76" width="236.4" height="23.2" fill="#fff" stroke="#b8b8b8" stroke-width="1"/>
<text x="783.2" y="516.6" font-size="10.4" fill="#111" font-style="italic" letter-spacing="-0.3" stroke="#111" stroke-width="0.3">Emphasis</text>
<rect x="771.6" y="527.73" width="236.4" height="23.2" fill="#fff" stroke="#b8b8b8" stroke-width="1"/>
<text x="783.2" y="543.5" font-size="10.4" fill="#4a6fa5" font-style="italic" letter-spacing="-0.25">Intense Emphasis</text>
<rect x="771.6" y="554.70" width="236.4" height="23.2" fill="#fff" stroke="#b8b8b8" stroke-width="1"/>
<text x="783.2" y="570.5" font-size="10.2" fill="#111" font-weight="bold" letter-spacing="-0.35">Strong</text>
<rect x="771.6" y="581.67" width="236.4" height="23.2" fill="#fff" stroke="#b8b8b8" stroke-width="1"/>
<text x="894.3" y="597.5" font-size="10.4" fill="#333" font-style="italic" text-anchor="middle">Quote</text>
<rect x="771.6" y="608.64" width="236.4" height="23.2" fill="#fff" stroke="#b8b8b8" stroke-width="1"/>
<text x="894" y="624.4" font-size="10.4" fill="#4a6fa5" font-style="italic" text-anchor="middle">Intense Quote</text>
<rect x="795" y="612.8" width="199" height="0.9" fill="#4a6fa5"/><rect x="795" y="627.6" width="199" height="0.9" fill="#4a6fa5"/>
<rect x="771.6" y="635.61" width="236.4" height="23.2" fill="#fff" stroke="#b8b8b8" stroke-width="1"/>
<text x="782.6" y="651.4" font-size="10" fill="#444">S<tspan font-size="7.8">UBTLE</tspan> R<tspan font-size="7.8">EFERENCE</tspan></text>
<rect x="771.6" y="662.58" width="236.4" height="23.2" fill="#fff" stroke="#b8b8b8" stroke-width="1"/>
</g>
<text x="767.4" y="693.6" font-size="12.4" fill="#dedede" stroke="#dedede" stroke-width="0.15">List:</text>
<rect x="799.5" y="677.7" width="212.7" height="21.3" rx="4" fill="#464646"/>
<text x="802.8" y="692.3" font-size="9.8" fill="#e8e8e8" stroke="#e8e8e8" stroke-width="0.1">Recommended</text>
<path d="M1004.8 686.5 L1006.8 684 L1008.8 686.5 Z M1004.8 690.5 L1006.8 693 L1008.8 690.5 Z" fill="#d0d0d0"/>
<rect x="767.6" y="711" width="12.6" height="12.8" rx="3" fill="#545454"/>
<text x="785.6" y="722.8" font-size="12.6" fill="#dedede" stroke="#dedede" stroke-width="0.15">Show styles guides</text>
<rect x="767.6" y="731.2" width="12.6" height="12.8" rx="3" fill="#545454"/>
<text x="785.6" y="743" font-size="12.7" fill="#dedede" stroke="#dedede" stroke-width="0.15">Show direct formatting guides</text>
</svg>

<svg class="a" style="left:0;top:0" width="1024" height="762" viewBox="0 0 1024 762">
<g fill="none" stroke="#dd3026" stroke-width="2.8">
<ellipse cx="32.8" cy="17.6" rx="30.8" ry="15.5"/>
<ellipse cx="859" cy="61.8" rx="40.3" ry="45.4" transform="rotate(7 859 61.8)"/>
<ellipse cx="821.3" cy="206.4" rx="75" ry="19"/>
</g></svg>
</body></html>
